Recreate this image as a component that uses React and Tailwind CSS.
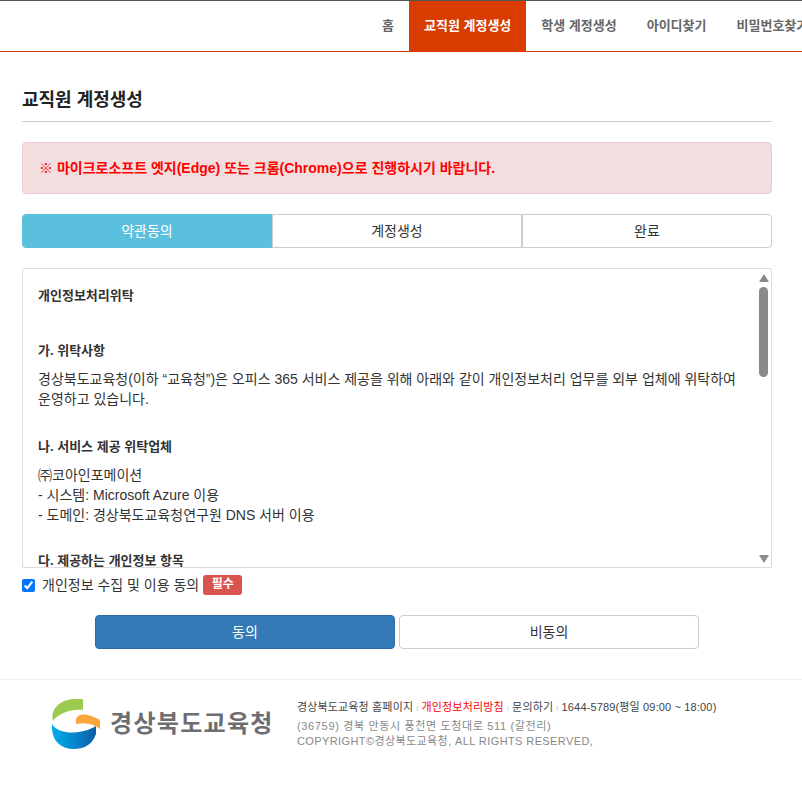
import React, { useState } from 'react';

const NAV_ITEMS = ['홈', '교직원 계정생성', '학생 계정생성', '아이디찾기', '비밀번호찾기'];
const STEPS = ['약관동의', '계정생성', '완료'];

const Logo = () => (
  <div className="flex items-center w-[297px] pl-[52px] shrink-0 -mt-px h-[52px]">
    <svg width="50" height="52" viewBox="0 0 50 52" className="shrink-0">
      <defs>
        <linearGradient id="blueBand" x1="0" y1="0" x2="1" y2="0">
          <stop offset="0" stopColor="#00aeef" />
          <stop offset="1" stopColor="#0a5ea8" />
        </linearGradient>
      </defs>
      <path d="M31 1 L31 12 C18 11 6 16 1 23 C-2 11 8 1 24 1 Z" fill="#9ccb4f" />
      <path d="M24 21 C27 15 34 15 48 22 L48 31 C42 26 34 24 24 26 Z" fill="#f9a53a" />
      <path d="M0 26 C6 37 30 37 44 28 L44 36 C40 48 30 51 22 51 C8 51 -1 42 0 26 Z" fill="url(#blueBand)" />
    </svg>
    <span className="ml-[8px] text-[24px] leading-[24px] font-bold text-[#6d6e71] whitespace-nowrap tracking-[1.3px]">경상북도교육청</span>
  </div>
);

const App = () => {
  const [agreed, setAgreed] = useState(true);

  return (
    <div className="w-[802px] h-[801px] overflow-hidden bg-white text-[#333] font-['Liberation_Sans','Noto_Sans_CJK_KR',sans-serif]">
      <header className="h-[52px] border-t border-t-[#555] border-b border-b-[#d83c00] flex pl-[367px] overflow-hidden">
        {NAV_ITEMS.map((item, i) => (
          <a
            key={item}
            className={`px-[15px] h-[50px] leading-[49px] text-[13px] font-bold whitespace-nowrap shrink-0 ${
              i === 1 ? 'bg-[#d83c00] text-white' : 'text-[#666]'
            }`}
          >
            {item}
          </a>
        ))}
      </header>

      <main className="pl-[22px] pr-[30px]">
        <h2 className="mt-[35px] h-[27px] leading-[27px] text-[18px] font-bold text-[#222]">교직원 계정생성</h2>
        <div className="mt-[7px] border-b border-[#ccc]" />

        <div className="mt-[20px] h-[52px] leading-[50px] px-[16px] bg-[#f2dede] border border-[#ebccd1] rounded text-[14px] font-bold text-[#f00]">
          ※ 마이크로소프트 엣지(Edge) 또는 크롬(Chrome)으로 진행하시기 바랍니다.
        </div>

        <div className="mt-[20px] h-[34px] grid grid-cols-3">
          {STEPS.map((step, i) => (
            <div
              key={step}
              className={`flex items-center justify-center text-[14px] border ${
                i === 0 ? 'bg-[#5bc0de] border-[#5bc0de] text-white rounded-l' : 'bg-white border-[#ccc] text-[#333]'
              } ${i === 2 ? 'rounded-r' : ''}`}
            >
              {step}
            </div>
          ))}
        </div>

        <div className="relative mt-[20px] h-[300px] border border-[#ddd] rounded-t-[2px] overflow-hidden">
          <div className="pl-[15px] pr-[22px] pt-[17px] text-[14px] leading-[20px]">
            <p className="font-bold text-[13px]">개인정보처리위탁</p>
            <p className="mt-[35px] font-bold text-[13px]">가. 위탁사항</p>
            <p className="mt-[8px]">
              경상북도교육청(이하 “교육청”)은 오피스 365 서비스 제공을 위해 아래와 같이 개인정보처리 업무를 외부 업체에 위탁하여 운영하고 있습니다.
            </p>
            <p className="mt-[28px] font-bold text-[13px]">나. 서비스 제공 위탁업체</p>
            <p className="mt-[8px]">㈜코아인포메이션</p>
            <p>- 시스템: Microsoft Azure 이용</p>
            <p>- 도메인: 경상북도교육청연구원 DNS 서버 이용</p>
            <p className="mt-[26px] font-bold text-[13px]">다. 제공하는 개인정보 항목</p>
          </div>

          {/* scrollbar */}
          <div className="absolute top-0 right-0 bottom-0 w-[17px] bg-white">
            <svg width="10" height="8" viewBox="0 0 10 8" className="absolute top-[5px] left-[5px]">
              <path d="M5 0 L10 8 L0 8 Z" fill="#8a8a8a" />
            </svg>
            <div className="absolute top-[18px] left-[5px] w-[9px] h-[90px] rounded-[5px] bg-[#8a8a8a]" />
            <svg width="10" height="8" viewBox="0 0 10 8" className="absolute bottom-[4px] left-[5px]">
              <path d="M0 0 L10 0 L5 8 Z" fill="#8a8a8a" />
            </svg>
          </div>
        </div>

        <label className="mt-[6px] h-[22px] flex items-center text-[14px]">
          <input
            type="checkbox"
            checked={agreed}
            onChange={(e) => setAgreed(e.target.checked)}
            className="w-[13px] h-[13px] m-0 accent-[#0075ff]"
          />
          <span className="ml-[7px]">개인정보 수집 및 이용 동의</span>
          <span className="ml-[4px] w-[39px] h-[20px] leading-[19px] text-center rounded-[3px] bg-[#d9534f] text-white text-[12px] font-bold">필수</span>
        </label>

        <div className="mt-[19px] flex justify-center gap-[4px]">
          <button type="button" className="w-[300px] h-[34px] rounded bg-[#337ab7] border border-[#2e6da4] text-white text-[14px]">동의</button>
          <button type="button" className="w-[300px] h-[34px] rounded bg-white border border-[#ccc] text-[#333] text-[14px]">비동의</button>
        </div>
      </main>

      <footer className="mt-[30px] border-t border-[#eee] pt-[19px] flex">
        <Logo />
        <div className="text-[11px] leading-[17px] text-[#888]">
          <p className="text-[#444] whitespace-nowrap tracking-[0.15px]">
            경상북도교육청 홈페이지
            <span className="mx-[3px] text-[#ccc] text-[8px]">I</span>
            <span className="text-[#f00]">개인정보처리방침</span>
            <span className="mx-[3px] text-[#ccc] text-[8px]">I</span>
            문의하기
            <span className="mx-[3px] text-[#ccc] text-[8px]">I</span>
            1644-5789(평일 09:00 ~ 18:00)
          </p>
          <p className="mt-[1px] whitespace-nowrap tracking-[0.65px]">(36759) 경북 안동시 풍천면 도청대로 511 (갈전리)</p>
          <p className="-mt-[2px] whitespace-nowrap tracking-[0.4px]">COPYRIGHT©경상북도교육청, ALL RIGHTS RESERVED,</p>
        </div>
      </footer>
    </div>
  );
};

export default App;
